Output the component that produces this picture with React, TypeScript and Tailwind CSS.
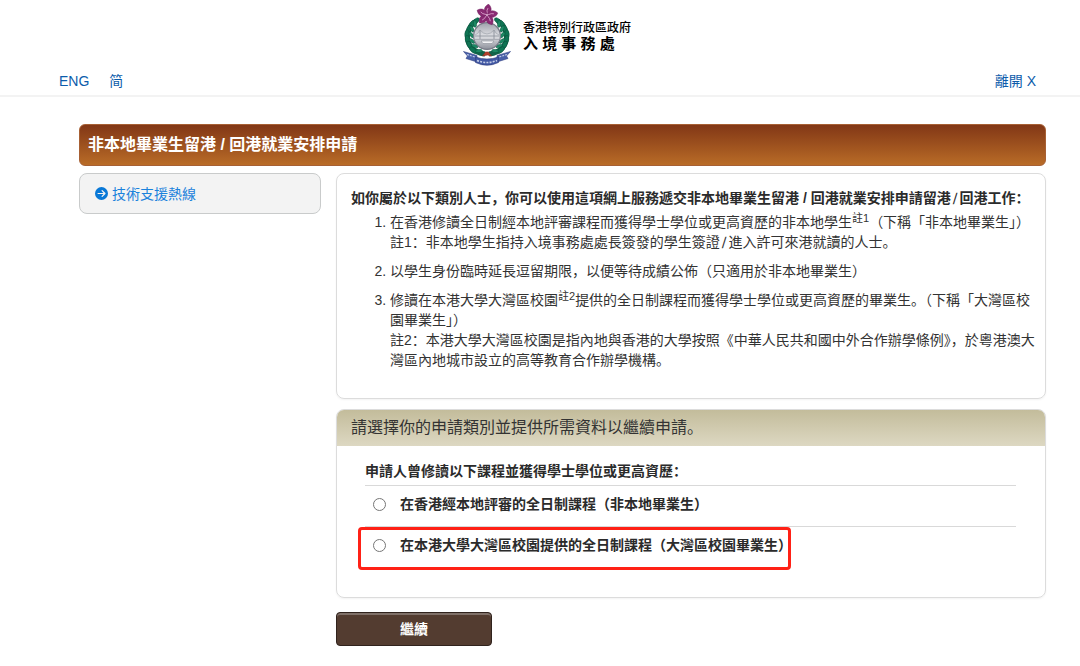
import { FaCircleArrowRight } from "react-icons/fa6";

const options = [
  { id: "local", label: "在香港經本地評審的全日制課程（非本地畢業生）", marked: false },
  { id: "gba", label: "在本港大學大灣區校園提供的全日制課程（大灣區校園畢業生）", marked: true },
];

const leaves = [
  [13, 17, -50], [9, 20, -35], [6, 25, -20], [4, 30, -5], [4.5, 35.5, 10], [6.5, 41, 28], [10, 46, 48],
];
const innerLeaves = [
  [12, 20, -20], [9, 25, 0], [8.5, 31, 15], [9, 37, 30], [12, 42, 50], [16, 47, 70],
];

function Wreath() {
  return (
    <g>
      <path d="M13 17C4 23 2 36 8 43Q13 49 22 50" fill="none" stroke="#126349" strokeWidth="5" />
      {leaves.map(([x, y, r], i) => (
        <ellipse key={i} cx={x} cy={y} rx="2.2" ry="4.2" transform={`rotate(${-r} ${x} ${y})`} fill="#0f7453" stroke="#0a4e3b" strokeWidth="0.5" />
      ))}
      {innerLeaves.map(([x, y, r], i) => (
        <ellipse key={i} cx={x} cy={y} rx="1.6" ry="3.4" transform={`rotate(${-r - 25} ${x} ${y})`} fill="#1c8863" stroke="#0a4e3b" strokeWidth="0.4" />
      ))}
    </g>
  );
}

function Emblem() {
  return (
    <svg viewBox="0 0 48 62" className="h-[62px] w-12" aria-hidden="true">
      <defs>
        <linearGradient id="disc" x1="0" y1="0" x2="0" y2="1">
          <stop offset="0" stopColor="#9da0aa" />
          <stop offset="0.5" stopColor="#e0e1e5" />
          <stop offset="1" stopColor="#8d909a" />
        </linearGradient>
      </defs>
      <Wreath />
      <g transform="translate(48 0) scale(-1 1)">
        <Wreath />
      </g>
      <circle cx="24" cy="32" r="13.4" fill="url(#disc)" stroke="#777b87" strokeWidth="1.2" />
      <path d="M11.5 32h25M17 26v9M31 26v9" fill="none" stroke="#868a94" strokeWidth="0.8" />
      <path d="M12 31Q15 30 17 26Q24 34 31 26Q33 30 36 31M12 35.500h24" fill="none" stroke="#969aa3" strokeWidth="0.6" />
      <path d="M18 37h13l-2 2.500h-9z" fill="#f4f4f6" stroke="#7b808a" strokeWidth="0.5" />
      {[0, 72, 144, 216, 288].map((angle) => (
        <g key={angle} transform={`rotate(${angle + 8} 24 11)`}>
          <path d="M24 11C20 8 19 4 24 0C28.500 3 28.500 8 24 11Z" fill="#8a2b73" stroke="#6b205b" strokeWidth="0.4" />
          <path d="M24 10Q22.800 6 24 4" fill="none" stroke="#d9a2cb" strokeWidth="0.8" />
        </g>
      ))}
      <circle cx="24" cy="11" r="1" fill="#e7bddb" />
      <path d="M19.500 52l3-4h3l3 4-4-1z" fill="#b5402b" stroke="#863022" strokeWidth="0.6" />
      <path d="M0.500 47.500L14 51.500V58L3 54.500L4.500 52Z" fill="#4860a8" stroke="#303f83" strokeWidth="0.6" />
      <path d="M47.500 47.500L34 51.500V58L45 54.500L43.500 52Z" fill="#4860a8" stroke="#303f83" strokeWidth="0.6" />
      <path d="M12.500 53Q24 57 35.500 53V58.500Q24 64 12.500 58.500Z" fill="#4158a4" stroke="#2d3b7b" strokeWidth="0.6" />
      <path d="M14 56.500Q24 60.500 34 56.500" fill="none" stroke="#c6cee7" strokeWidth="1.600" strokeDasharray="2 1.200" />
      <path d="M4 50.500l8 2.500M44 50.500l-8 2.500" stroke="#bac5e3" strokeWidth="1.200" strokeDasharray="2 1" />
    </svg>
  );
}

function Header() {
  return (
    <header className="border-b-2 border-[#f3f3f3] pt-1">
      <div className="flex h-[62px] items-center justify-center gap-3 pl-[14px]">
        <Emblem />
        <div className="flex flex-col pt-px text-black">
          <span className="text-xs leading-4 font-medium">香港特別行政區政府</span>
          <span className="text-[15px] leading-4 font-bold">入 境 事 務 處</span>
        </div>
      </div>
      <nav className="flex h-[29px] items-center pr-11 pl-[59px] text-sm text-[#0c5cab]">
        <a href="#eng">ENG</a>
        <a href="#sc" className="ml-5">简</a>
        <a href="#leave" className="ml-auto">離開 X</a>
      </nav>
    </header>
  );
}

/** Division slash from a face that gives it its own narrow width. */
function Slash() {
  return <span className="px-0.5 font-['DejaVu_Sans',sans-serif] leading-none font-normal">∕</span>;
}

export default function App() {
  return (
    <div className="min-h-screen bg-white pb-5 font-['Liberation_Sans','Noto_Sans_CJK_SC',sans-serif] text-sm leading-5 text-[#333]">
      <Header />
      <main className="mt-[27px] mr-[34px] ml-[79px] flex flex-col gap-[7px]">
        <h1 className="flex h-[42px] items-center rounded-md border border-[#a76034] bg-linear-to-b from-[#823716] to-[#b96c27] px-2 text-base font-bold text-white">
          非本地畢業生留港 / 回港就業安排申請
        </h1>
        <div className="flex items-start gap-[15px]">
          <aside className="flex h-[41px] w-[242px] shrink-0 items-center rounded-lg border border-[#c9cbcb] bg-[#f3f3f3] px-[15px]">
            <a href="#hotline" className="flex items-center gap-1 text-[#1b82dc]">
              <FaCircleArrowRight className="size-[13px] text-[#0878d7]" />
              技術支援熱線
            </a>
          </aside>
          <div className="min-w-0 flex-1">
            <section className="rounded-lg border border-[#dcdcdc] pt-[14px] pr-1 pb-7 pl-[14px] shadow-xs">
              <h2 className="font-bold text-[#2b2b2b]">
                如你屬於以下類別人士，你可以使用這項網上服務遞交非本地畢業生留港 / 回港就業安排申請留港<Slash />回港工作：
              </h2>
              <ol className="mt-1 flex list-decimal flex-col gap-[9px] pl-[39px]">
                <li>
                  在香港修讀全日制經本地評審課程而獲得學士學位或更高資歷的非本地學生<sup className="text-[11px]">註1</sup>（下稱「非本地畢業生」）
                  <p>註1：非本地學生指持入境事務處處長簽發的學生簽證<Slash />進入許可來港就讀的人士。</p>
                </li>
                <li>以學生身份臨時延長逗留期限，以便等待成績公佈（只適用於非本地畢業生）</li>
                <li>
                  修讀在本港大學大灣區校園<sup className="text-[11px]">註2</sup>提供的全日制課程而獲得學士學位或更高資歷的畢業生。（下稱「大灣區校園畢業生」）
                  <p>註2：本港大學大灣區校園是指內地與香港的大學按照《中華人民共和國中外合作辦學條例》，於粵港澳大灣區內地城市設立的高等教育合作辦學機構。</p>
                </li>
              </ol>
            </section>
            <form className="mt-[10px]" onSubmit={(e) => e.preventDefault()}>
              <section className="overflow-hidden rounded-lg border border-[#dcdcdc] pb-[30px] shadow-xs">
                <h2 className="flex h-9 items-center bg-linear-to-b from-[#c3bc9b] to-[#ddd8c2] px-[14px] text-base">
                  請選擇你的申請類別並提供所需資料以繼續申請。
                </h2>
                <fieldset className="mr-[29px] ml-7 pt-[15px] font-bold text-[#2b2b2b]">
                  <legend className="float-left mb-1">申請人曾修讀以下課程並獲得學士學位或更高資歷：</legend>
                  <div className="clear-both">
                    {options.map((option) => (
                      <div key={option.id} className="relative flex h-[41px] items-center border-t border-[#d9d9d9] pb-1 pl-2">
                        <input type="radio" id={option.id} name="category" value={option.id} className="size-[13px]" />
                        <label htmlFor={option.id} className="pl-[14px] whitespace-nowrap">{option.label}</label>
                        {option.marked && (
                          <span className="pointer-events-none absolute top-0 -left-[7px] h-[43px] w-[433px] rounded-sm border-3 border-[#ff2116]" />
                        )}
                      </div>
                    ))}
                  </div>
                </fieldset>
              </section>
              <button type="submit" className="mt-[14px] h-[34px] w-[156px] rounded-sm border border-[#30231d] bg-[#533c30] font-bold text-white inset-shadow-[0_2px_0_#7f7068]">
                繼續
              </button>
            </form>
          </div>
        </div>
      </main>
    </div>
  );
}
